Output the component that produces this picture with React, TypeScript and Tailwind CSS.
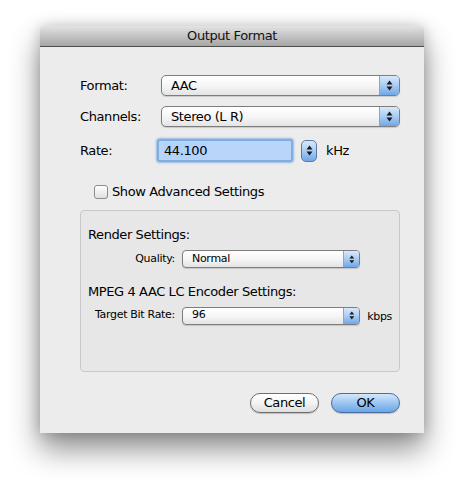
import React from "react";

const font = { fontFamily: '"DejaVu Sans", "Lucida Grande", sans-serif' };

function Arrows({ size = 1 }: { size?: number }) {
  return (
    <svg width={7 * size} height={11 * size} viewBox="0 0 7 11">
      <path d="M3.5 0.5 L6.5 4.5 L0.5 4.5 Z" fill="#1a1a1a" />
      <path d="M3.5 10.5 L6.5 6.5 L0.5 6.5 Z" fill="#1a1a1a" />
    </svg>
  );
}

function Popup({ value, small }: { value: string; small?: boolean }) {
  return (
    <div
      className={
        "flex items-stretch border border-[#7d7d7d] bg-gradient-to-b from-[#ffffff] via-[#f6f6f6] to-[#e4e4e4] shadow-[0_1px_1px_rgba(0,0,0,0.15)] " +
        (small ? "h-[18px] rounded-[4px] text-[11px] tracking-[-0.3px]" : "h-[21px] rounded-[5px] text-[13px] tracking-[-0.4px]")
      }
    >
      <div className="flex flex-1 items-center text-black pl-[9px]">{value}</div>
      <div
        className={
          "flex items-center justify-center border-l border-[#8aa5c6] bg-gradient-to-b from-[#d9e9fb] via-[#a9ccf2] to-[#6fa7e6] " +
          (small ? "w-[16px] rounded-r-[3px]" : "w-[20px] rounded-r-[4px]")
        }
      >
        <Arrows size={small ? 0.8 : 1} />
      </div>
    </div>
  );
}

export default function App() {
  return (
    <div className="w-[464px] h-[488px] bg-white relative overflow-hidden" style={font}>
      <div className="pt-[26px] pl-[40px]">
        <div className="w-[384px] h-[407px] flex flex-col bg-[#ececec] rounded-t-[4px] shadow-[0_16px_30px_rgba(0,0,0,0.45),0_0_14px_rgba(0,0,0,0.18)]">
          {/* Title bar */}
          <div className="h-[21px] rounded-t-[4px] bg-gradient-to-b from-[#e3e3e3] to-[#a6a6a6] border-b border-[#4d4d4d] flex items-center justify-center text-[13px] tracking-[-0.4px] text-[#111]">
            Output Format
          </div>
          <div className="flex flex-col pl-[40px] pr-[24px] pt-[28px] text-[13px] tracking-[-0.4px] text-black">
            <div className="flex items-center h-[21px]">
              <div className="w-[81px]">Format:</div>
              <div className="flex-1">
                <Popup value="AAC" />
              </div>
            </div>
            <div className="flex items-center h-[21px] mt-[10px]">
              <div className="w-[81px]">Channels:</div>
              <div className="flex-1">
                <Popup value="Stereo (L R)" />
              </div>
            </div>
            <div className="flex items-center h-[23px] mt-[12px]">
              <div className="w-[77px]">Rate:</div>
              <div className="w-[136px] h-[23px] rounded-[3px] border-[2px] border-[#7eaee0] shadow-[0_0_2px_1px_rgba(95,150,215,0.6)] bg-[#b9d6fa] flex items-center pl-[5px] text-[13px]">
                <div className="h-[17px] flex items-center bg-[#b3d3fb]">44.100</div>
              </div>
              <div className="ml-[8px] w-[16px] h-[22px] rounded-[5px] border border-[#5a7aa3] bg-gradient-to-b from-[#d9e9fb] via-[#a9ccf2] to-[#6fa7e6] flex items-center justify-center">
                <Arrows />
              </div>
              <div className="ml-[9px]">kHz</div>
            </div>
            <div className="flex items-center mt-[20px] pl-[14px]">
              <div className="w-[14px] h-[14px] rounded-[3px] border border-[#8c8c8c] bg-gradient-to-b from-[#ffffff] to-[#e1e1e1]" />
              <div className="ml-[4px]">Show Advanced Settings</div>
            </div>
            <div className="mt-[8px] h-[162px] border border-[#c9c9c9] rounded-[4px] bg-[#e7e7e7] flex flex-col pl-[7px] pr-[39px]">
              <div className="mt-[14px]">Render Settings:</div>
              <div className="flex items-center mt-[6px] text-[11px] tracking-[-0.3px]">
                <div className="w-[94px] text-right pr-[7px]">Quality:</div>
                <div className="flex-1">
                  <Popup value="Normal" small />
                </div>
              </div>
              <div className="mt-[14px]">MPEG 4 AAC LC Encoder Settings:</div>
              <div className="flex items-center mt-[5px] text-[11px] tracking-[-0.3px] relative">
                <div className="w-[94px] text-right pr-[7px]">Target Bit Rate:</div>
                <div className="flex-1">
                  <Popup value="96" small />
                </div>
                <div className="absolute right-[-32px] top-[2px] text-[11px]">kbps</div>
              </div>
            </div>
            <div className="flex justify-end mt-[21px] gap-[12px]">
              <div className="w-[69px] h-[20px] rounded-full border border-[#6e6e6e] bg-gradient-to-b from-[#ffffff] via-[#f3f3f3] to-[#dedede] flex items-center justify-center text-[13px] shadow-[0_1px_1px_rgba(0,0,0,0.2)]">
                Cancel
              </div>
              <div className="w-[69px] h-[20px] rounded-full border border-[#4b6d9a] bg-gradient-to-b from-[#d4e7fb] via-[#9cc5f0] to-[#6aa6e8] flex items-center justify-center text-[13px] shadow-[0_1px_1px_rgba(0,0,0,0.2)]">
                OK
              </div>
            </div>
          </div>
        </div>
      </div>
    </div>
  );
}
